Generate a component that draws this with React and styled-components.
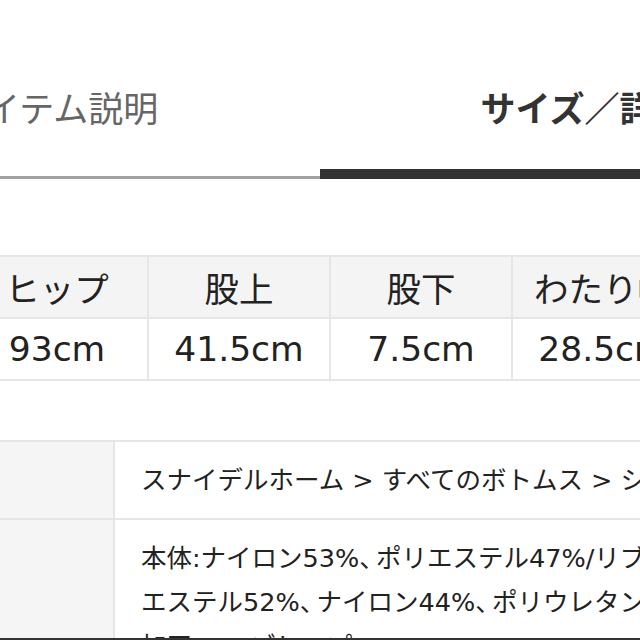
import React from "react";
import styled, { createGlobalStyle } from "styled-components";

const GlobalStyle = createGlobalStyle`
  body {
    margin: 0;
    background: #fff;
    font-family: "DejaVu Sans", "Noto Sans CJK JP", sans-serif;
    color: #222;
  }
`;

const Page = styled.div`
  width: 640px;
  height: 640px;
  overflow: hidden;
  background: #fff;
`;

const Tabs = styled.div`
  display: flex;
  width: 1060px;
  margin-left: -210px;
`;

const Tab = styled.div`
  flex: 1;
  box-sizing: border-box;
  height: 179px;
  padding-top: 89px;
  text-align: center;
  font-family: "Noto Sans CJK JP", sans-serif;
  font-size: 35px;
  line-height: 36px;
  white-space: nowrap;
  color: ${(p) => (p.$active ? "#333" : "#666")};
  font-weight: ${(p) => (p.$active ? 700 : 400)};
  border-bottom: ${(p) => (p.$active ? "10px solid #333" : "3px solid #a2a2a2")};
`;

const SizeGrid = styled.div`
  display: grid;
  grid-template-columns: repeat(5, 182px);
  margin: 76px 0 0 -35px;
  width: max-content;
  border-top: 2px solid #e6e6e6;
  border-left: 2px solid #e6e6e6;
`;

const SizeCell = styled.div`
  box-sizing: border-box;
  height: 62px;
  display: flex;
  align-items: center;
  justify-content: center;
  white-space: nowrap;
  font-size: 34.5px;
  color: #222;
  background: ${(p) => (p.$head ? "#f4f4f4" : "#fff")};
  border-right: 2px solid #e6e6e6;
  border-bottom: 2px solid #e6e6e6;
`;

const InfoTable = styled.div`
  display: grid;
  grid-template-columns: 300px 1fr;
  margin: 59px 0 0 -185px;
  border-top: 2px solid #e6e6e6;
`;

const InfoLabel = styled.div`
  background: #f5f5f5;
  padding: 16px 0 16px 20px;
  font-size: 25.5px;
  color: #222;
  white-space: nowrap;
  overflow: hidden;
  border-right: 2px solid #e6e6e6;
  border-bottom: 2px solid #e6e6e6;
`;

const InfoValue = styled.div`
  padding: 16px 0 16px 26px;
  font-size: 25.5px;
  color: #222;
  white-space: nowrap;
  border-bottom: 2px solid #e6e6e6;
`;

const Line = styled.div`
  height: 44px;
  line-height: 44px;
  width: ${(p) => (p.$label ? "120px" : "auto")};
  overflow: ${(p) => (p.$label ? "hidden" : "visible")};
`;

// half-width ideographic comma, like the original's proportional punctuation
const Comma = styled.span`
  font-feature-settings: "halt";
  margin-right: 4px;
`;

const BottomEdge = styled.div`
  position: fixed;
  left: 0;
  right: 0;
  bottom: 0;
  height: 2px;
  background: #333;
`;

const heads = ["ヒップ", "股上", "股下", "わたり幅", "裾幅"];
const values = ["93cm", "41.5cm", "7.5cm", "28.5cm", "30cm"];

const withCommas = (text) =>
  text.split("、").flatMap((part, i, arr) =>
    i < arr.length - 1 ? [part, <Comma key={i}>、</Comma>] : [part]
  );

export default function App() {
  return (
    <Page>
      <GlobalStyle />
      <Tabs>
        <Tab>アイテム説明</Tab>
        <Tab $active>サイズ／詳細</Tab>
      </Tabs>

      <SizeGrid>
        {heads.map((h) => (
          <SizeCell key={h} $head>
            {h}
          </SizeCell>
        ))}
        {values.map((v, i) => (
          <SizeCell key={i}>{v}</SizeCell>
        ))}
      </SizeGrid>

      <InfoTable>
        <InfoLabel>
          <Line $label>カテゴリ</Line>
        </InfoLabel>
        <InfoValue>
          <Line>スナイデルホーム &gt; すべてのボトムス &gt; ショートパンツ</Line>
        </InfoValue>
        <InfoLabel>
          <Line $label>素材</Line>
        </InfoLabel>
        <InfoValue>
          <Line>{withCommas("本体:ナイロン53%、ポリエステル47%/リブ:ポリ")}</Line>
          <Line>{withCommas("エステル52%、ナイロン44%、ポリウレタン4%")}</Line>
          <Line>加工:ローズレップ</Line>
        </InfoValue>
      </InfoTable>
      <BottomEdge />
    </Page>
  );
}
